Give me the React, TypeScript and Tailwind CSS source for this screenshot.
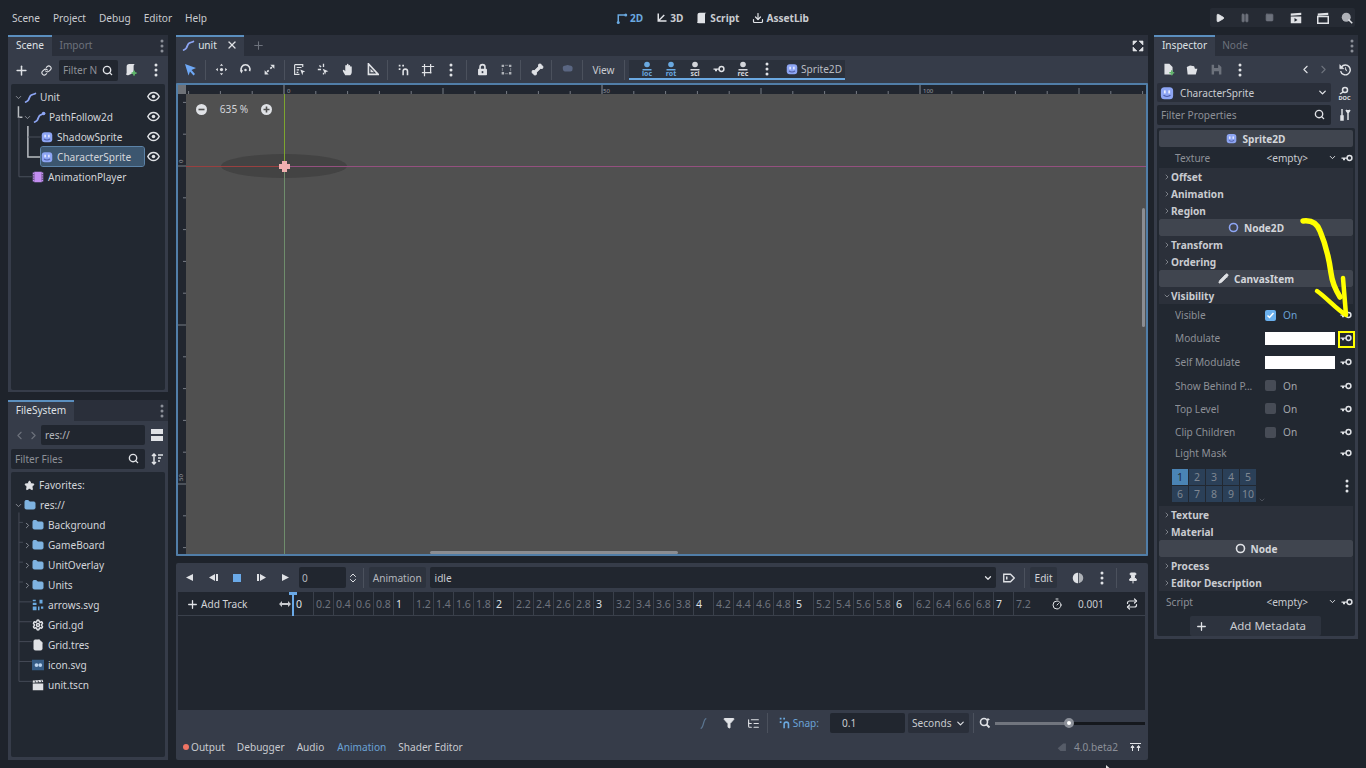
import React from "react";
import { Plus, Search, ChevronDown, ChevronRight, ChevronLeft, X, Star, Folder, File, Settings, Filter, Link, Bone, Pause, Square, Play, ListTree, Timer, Repeat, Pin, Pencil, Download, ChevronsUpDown } from "lucide-react";

const W = "#e0e2e6";
const NB = "#8da5f3";
const AC = "#6aa9e0";

function S({ s = 14, children, className = "" }: { s?: number; children: React.ReactNode; className?: string }) {
  return <svg width={s} height={s} viewBox="0 0 16 16" className={"shrink-0 " + className}>{children}</svg>;
}
const PathI = ({ dot = false }: { dot?: boolean }) => (
  <S s={13}><path d="M2 13.500c1-.5 2.500-.5 3.500-2.500S7 6 9 5s3-1 5-2" fill="none" stroke={NB} strokeWidth="2.200" strokeLinecap="round" />{dot && <circle cx="13" cy="3" r="2.200" fill={NB} />}</S>
);
const SpriteI = ({ s = 12 }: { s?: number }) => (
  <S s={s}><rect x="1" y="1.500" width="14" height="13.500" rx="4" fill={NB} /><rect x="4.500" y="5" width="2" height="3.500" fill="#e8ecff" /><rect x="9.500" y="5" width="2" height="3.500" fill="#e8ecff" /><path d="M4 10.500c2 2 6 2 8 0" stroke="#4c5aa6" strokeWidth="1.400" fill="none" /></S>
);
const AnimI = () => (
  <S s={12}><rect x="3" y="1" width="10" height="14" fill="#c38ef1" /><rect x="1" y="2" width="2" height="12" fill="#c38ef1" /><rect x="13" y="2" width="2" height="12" fill="#c38ef1" /><path d="M1 5h2M1 8h2M1 11h2M13 5h2M13 8h2M13 11h2" stroke="#222831" strokeWidth="1" /></S>
);
const EyeI = () => (
  <S s={13}><path d="M1 8c1.800-3.600 4.300-5 7-5s5.200 1.400 7 5c-1.800 3.600-4.300 5-7 5s-5.200-1.400-7-5z" fill="none" stroke={W} strokeWidth="1.800" /><circle cx="8" cy="8" r="2.200" fill={W} /></S>
);
const KeyI = () => (
  <svg width="12" height="8" viewBox="0 0 12 8" className="shrink-0"><circle cx="8.500" cy="4" r="2.400" fill="none" stroke={W} strokeWidth="1.500" /><path d="M0.500 3.400h5.500v1.400h-2v1.400h-2v-1.400h-1.500z" fill={W} /></svg>
);
const Dots = ({ c = W }: { c?: string }) => (
  <svg width="4" height="14" viewBox="0 0 4 14" className="shrink-0"><circle cx="2" cy="2" r="1.500" fill={c} /><circle cx="2" cy="7" r="1.500" fill={c} /><circle cx="2" cy="12" r="1.500" fill={c} /></svg>
);
const Magnet = ({ c = W }: { c?: string }) => (
  <S s={14}><path d="M7 14V9.500a2.500 2.500 0 0 1 5 0V14" fill="none" stroke={c} strokeWidth="1.800" /><path d="M2 3h2M2 7h2M6 3h2" stroke={c} strokeWidth="1.800" /></S>
);
const KeyToolI = ({ t, c = AC }: { t: string; c?: string }) => (
  <svg width="18" height="18" viewBox="0 0 18 18" className="shrink-0">
    <circle cx="9" cy="4.500" r="2.800" fill={c} />
    <path d="M4.500 9h9v1.500h-9z" fill={c} />
    <text x="9" y="16" textAnchor="middle" fontSize="7" fontWeight="700" fill={c} fontFamily="Noto Sans">{t}</text>
  </svg>
);

function Cell({ w = "w-[24px]", children }: { w?: string; children?: React.ReactNode }) {
  return <div className={w + " h-full flex items-center justify-center shrink-0"}>{children}</div>;
}
const Sep = ({ m = "mx-[2px]" }: { m?: string }) => <div className={"w-px h-[20px] bg-[#4b515d] shrink-0 " + m} />;

function Tab({ label, active, w }: { label: React.ReactNode; active?: boolean; w: string }) {
  return (
    <div className={w + " h-[21px] flex items-center justify-center shrink-0 " + (active ? "bg-[#363c49] border-t-2 border-[#5b8fbf] text-[#dfe1e5] pb-[3px]" : "text-[#6d727c] pb-[1px]")}>{label}</div>
  );
}
function DockTabs({ children }: { children: React.ReactNode }) {
  return <div className="h-[21px] flex items-center bg-[#2a2f3a] shrink-0 relative">{children}<div className="ml-auto mr-[4px]"><Dots c="#8b8f98" /></div></div>;
}
function Field({ className = "", children }: { className?: string; children?: React.ReactNode }) {
  return <div className={"bg-[#21262f] rounded-[2px] flex items-center text-[#b4b7bd] " + className}>{children}</div>;
}

const sceneRows = [
  { name: "Unit", cls: "pl-[3px] gap-[2px]", tx: "ml-[1px]", chev: true, icon: <PathI /> },
  { name: "PathFollow2d", cls: "pl-[12px] gap-[2px]", tx: "ml-[1px]", chev: true, icon: <PathI dot /> },
  { name: "ShadowSprite", cls: "pl-[30px] gap-[4px]", tx: "", icon: <SpriteI /> },
  { name: "CharacterSprite", cls: "pl-[30px] gap-[4px]", tx: "", sel: true, icon: <SpriteI /> },
  { name: "AnimationPlayer", cls: "pl-[21px] gap-[4px]", tx: "", noEye: true, icon: <AnimI /> },
];

function SceneDock() {
  return (
    <div className="h-[357px] flex flex-col bg-[#363c49]">
      <DockTabs>
        <Tab label="Scene" active w="w-[44px]" />
        <Tab label="Import" w="w-[48px]" />
      </DockTabs>
      <div className="h-[28px] flex items-center shrink-0">
        <Cell w="w-[26px]"><Plus size={15} strokeWidth={2.400} color={W} /></Cell>
        <Cell w="w-[24px]"><Link size={11} strokeWidth={2.400} color={W} /></Cell>
        <Field className="w-[59px] h-[21px] ml-px pl-[4px] gap-[3px] overflow-hidden">
          <span className="w-[36px] overflow-hidden whitespace-nowrap text-[#8d9097]">Filter N</span><Search size={11} strokeWidth={3} color={W} />
        </Field>
        <Cell w="w-[26px]">
          <svg width="14" height="14" viewBox="0 0 16 16"><path d="M5 14c-3 0-3-2-2-2V4c0-2 1-3 3-3h7c-2 0-2 2-2 4v6" fill={W} /><path d="M9 11h5v1h-5zM11 9h1v5h-1z" fill="#5fb56a" stroke="#5fb56a" strokeWidth="1" /></svg>
        </Cell>
        <Cell w="w-[24px]"><Dots /></Cell>
      </div>
      <div className="flex-1 mx-[3px] mb-[2px] bg-[#222831] rounded-[2px] pt-[3px] relative">
        <svg className="absolute left-0 top-0 w-full h-[110px] pointer-events-none" viewBox="0 0 155 110">
          <path d="M7.500 22v11h4" fill="none" stroke={W} strokeWidth="1.500" opacity=".8" />
          <path d="M17 42v31h13" fill="none" stroke={W} strokeWidth="1.500" opacity=".8" />
          <path d="M17 53h13M8 33v60h13" fill="none" stroke="#4a505c" strokeWidth="1" />
        </svg>
        {sceneRows.map((r) => (
          <div key={r.name} className={"relative h-[20px] flex items-center " + r.cls}>
            {r.sel && <div className="absolute left-[30px] top-0 w-[103px] h-[19px] bg-[#3c566f] outline outline-1 outline-[#5c83a8] rounded-[2px]" />}
            {r.chev && <ChevronDown size={9} strokeWidth={2.500} color="#8b8f98" className="-mr-[1px]" />}
            <div className="relative flex items-center">{r.icon}</div>
            <span className={"relative whitespace-nowrap text-[#d3d5da] " + r.tx}>{r.name}</span>
            {!r.noEye && <div className="absolute left-[136px] top-[3px]"><EyeI /></div>}
          </div>
        ))}
      </div>
    </div>
  );
}

const fsRows = [
  { n: "Background", chev: true, ic: "f" },
  { n: "GameBoard", chev: true, ic: "f" },
  { n: "UnitOverlay", chev: true, ic: "f" },
  { n: "Units", chev: true, ic: "f" },
  { n: "arrows.svg", ic: "a" },
  { n: "Grid.gd", ic: "g" },
  { n: "Grid.tres", ic: "t" },
  { n: "icon.svg", ic: "i" },
  { n: "unit.tscn", ic: "s" },
];
function FsIcon({ k }: { k: string }) {
  if (k === "f") return <Folder size={12} fill="#7fb3e0" color="#7fb3e0" className="shrink-0" />;
  if (k === "g") return <Settings size={12} strokeWidth={3} color={W} className="shrink-0" />;
  if (k === "t") return <File size={12} fill={W} color={W} className="shrink-0" />;
  if (k === "a") return (
    <S s={12}><path d="M1 1h4v2h-4zM10 1h4v5h-4zM1 5h5v3h-5zM1 10h5v5h-5zM8 10h2v5h-2zM12 10h3v3h-3z" fill={AC} /></S>
  );
  if (k === "i") return (
    <S s={12}><rect x="0" y="1" width="16" height="14" fill="#365c85" /><circle cx="6" cy="8" r="2.500" fill="#bcd4ef" /><circle cx="11" cy="8" r="2.500" fill="#bcd4ef" /></S>
  );
  return <S s={12}><path d="M1 6h14v9h-14z" fill={W} /><path d="M1 2l13-1 1 3-14 1z" fill={W} /><path d="M4 2l1 3M8 2l1 3M12 1.500l1 3" stroke="#222831" /></S>;
}
function FsDock() {
  return (
    <div className="h-[360px] flex flex-col bg-[#363c49]">
      <DockTabs>
        <Tab label="FileSystem" active w="w-[66px]" />
      </DockTabs>
      <div className="h-[28px] flex items-center shrink-0">
        <Cell w="w-[18px]"><ChevronLeft size={13} color="#6d727c" className="ml-[4px]" /></Cell>
        <Cell w="w-[15px]"><ChevronRight size={13} color="#6d727c" /></Cell>
        <Field className="w-[104px] h-[20px] pl-[4px]"><span>res://</span></Field>
        <Cell w="w-[23px]"><div className="w-[12px] flex flex-col gap-[2px]"><div className="h-[5px] bg-[#e0e2e6]" /><div className="h-[5px] bg-[#e0e2e6]" /></div></Cell>
      </div>
      <div className="h-[23px] flex items-start shrink-0 pl-[3px]">
        <Field className="w-[134px] h-[20px] pl-[4px] pb-[1px] justify-between pr-[6px]"><span className="text-[#8d9097]">Filter Files</span><Search size={11} strokeWidth={3} color={W} /></Field>
        <Cell w="w-[23px] !h-[20px]">
          <svg width="12" height="12" viewBox="0 0 12 12"><path d="M3 1v10M1 3l2-2 2 2M1 9l2 2 2-2M7 2h5M7 5h3M7 8h2" fill="none" stroke={W} strokeWidth="1.500" /></svg>
        </Cell>
      </div>
      <div className="flex-1 mx-[3px] mb-[3px] bg-[#222831] rounded-[2px] pt-[3px] relative">
        <svg className="absolute left-0 top-0 w-full h-[220px] pointer-events-none" viewBox="0 0 155 220">
          <path d="M8 40v170M8 50h4M8 70h4M8 90h4M8 110h4M8 130h13M8 150h13M8 170h13M8 190h13M8 210h13" fill="none" stroke="#454b57" strokeWidth="1" />
        </svg>
        <div className="relative h-[20px] flex items-center pl-[13px] gap-[4px]"><Star size={11} fill={W} color={W} /><span className="text-[#d3d5da]">Favorites:</span></div>
        <div className="relative h-[20px] flex items-center pl-[3px] gap-[1px]"><ChevronDown size={9} strokeWidth={2.500} color="#8b8f98" /><Folder size={12} fill="#7fb3e0" color="#7fb3e0" /><span className="text-[#d3d5da] ml-[3px]">res://</span></div>
        {fsRows.map((r) => (
          <div key={r.n} className={"relative h-[20px] flex items-center " + (r.chev ? "pl-[12px]" : "pl-[21px]")}>
            {r.chev && <ChevronRight size={9} strokeWidth={2.500} color="#8b8f98" />}
            <FsIcon k={r.ic} />
            <span className="ml-[4px] text-[#d3d5da]">{r.n}</span>
          </div>
        ))}
      </div>
    </div>
  );
}

function Viewport() {
  const W_ = 968, H_ = 470;
  const ticks = [];
  for (let i = -3; i <= 27; i++) {
    const x = 106 + i * 31.8;
    const long = i % 5 === 0 && i !== 0 && i % 10 !== 0;
    const maj = i % 10 === 0;
    ticks.push(<line key={i} x1={x} x2={x} y1={maj ? 0 : long ? 3 : 6} y2={9} stroke={maj ? "#8b8f98" : "#777c85"} strokeWidth="1" />);
  }
  const vt = [];
  for (let i = 0; i < 15; i++) {
    const y = 81 + (i - 2) * 31.8;
    vt.push(<line key={i} x1={i % 5 === 2 ? 0 : 5} x2={8} y1={y} y2={y} stroke="#777c85" />);
  }
  return (
    <div className="flex-1 border-2 border-[#517ea8] rounded-[1px] relative overflow-hidden bg-[#505050]">
      <svg className="absolute inset-0" width={W_} height={H_} viewBox={`0 0 ${W_} ${H_}`}>
        <rect x="0" y="0" width={W_} height="9" fill="#21262f" />
        <rect x="0" y="0" width="8" height={H_} fill="#21262f" />
        <rect x="0" y="0" width="8" height="9" fill="#6e7278" />
        {ticks}
        {vt}
        <text x="109" y="8" fontSize="6" fill="#9a9da3" fontFamily="Noto Sans">0</text>
        <text x="425" y="8" fontSize="6" fill="#9a9da3" fontFamily="Noto Sans">50</text>
        <text x="745" y="8" fontSize="6" fill="#9a9da3" fontFamily="Noto Sans">100</text>
        <text x="5" y="78" fontSize="6" fill="#9a9da3" fontFamily="Noto Sans" transform="rotate(-90 5 78)">0</text>
        <text x="5" y="396" fontSize="6" fill="#9a9da3" fontFamily="Noto Sans" transform="rotate(-90 5 396)">50</text>
        <ellipse cx="106" cy="81" rx="63" ry="12" fill="#434343" />
        <line x1="106.500" x2="106.500" y1="9" y2="81" stroke="#7da52f" />
        <line x1="106.500" x2="106.500" y1="81" y2="470" stroke="#6f8d6c" />
        <line x1="8" x2="106" y1="81.500" y2="81.500" stroke="#984040" />
        <line x1="106" x2="968" y1="81.500" y2="81.500" stroke="#94507f" />
        <path d="M104 76h5v3h3v5h-3v3h-5v-3h-3v-5h3z" fill="#f0b0b0" />
        <rect x="252" y="466" width="248" height="3" rx="1.500" fill="#8b8d92" />
        <rect x="964" y="123" width="3" height="119" rx="1.500" fill="#8b8d92" />
      </svg>
      <div className="absolute left-[18px] top-[17px] flex items-center text-[#d3d5da]">
        <svg width="11" height="11" viewBox="0 0 11 11"><circle cx="5.500" cy="5.500" r="5.500" fill={W} /><rect x="2.500" y="4.700" width="6" height="1.600" fill="#505050" /></svg>
        <span className="w-[54px] text-center">635 %</span>
        <svg width="11" height="11" viewBox="0 0 11 11"><circle cx="5.500" cy="5.500" r="5.500" fill={W} /><path d="M2.500 4.700h2.200v-2.200h1.600v2.200h2.200v1.600h-2.200v2.200h-1.600v-2.200h-2.200z" fill="#505050" /></svg>
      </div>
    </div>
  );
}

function Toolbar2D() {
  return (
    <div className="h-[27px] flex items-center pl-[2px] shrink-0">
      <Cell><svg width="13" height="13" viewBox="0 0 13 13"><path d="M1 1l11 4-4.500 2 3.500 4-1.500 1.500-3.500-4-1.500 4z" fill="#6ea8f5" /></svg></Cell>
      <Sep m="mx-[3px]" />
      <Cell><S s={13}><circle cx="8" cy="8" r="2" fill={W} /><path d="M8 1l2 2.500h-4zM8 15l2-2.500h-4zM1 8l2.500 2v-4zM15 8l-2.500 2v-4z" fill={W} /></S></Cell>
      <Cell><S s={13}><path d="M3 10a5.500 5.500 0 1 1 10 0" fill="none" stroke={W} strokeWidth="2" /><circle cx="8" cy="8.500" r="1.500" fill={W} /><path d="M1 9h4l-2 4z" fill={W} /></S></Cell>
      <Cell><S s={13}><path d="M9 2h5v5zM2 14v-5l5 5z" fill={W} /><path d="M11 5L9 7M5 11l2-2" stroke={W} strokeWidth="2" /></S></Cell>
      <Sep m="ml-[3px] mr-[2px]" />
      <Cell><S s={13}><path d="M2 2h10v3M2 2v12h6M4.500 5.500h6M4.500 8.500h3M4.500 11.500h2" fill="none" stroke={W} strokeWidth="1.400" /><path d="M9 8l6 2.500-2.500 1L11.500 15z" fill={W} /></S></Cell>
      <Cell w="w-[25px]"><S s={13}><path d="M1 8h4M8 1v4M3 3l2 2M8 14v-2" stroke={W} strokeWidth="1.600" /><path d="M7 7l7 3-3 1-1 3z" fill={W} /></S></Cell>
      <Cell><S s={13}><path d="M4 15c-1-2-3-4-3-6 0-1 1-1 2 0l1 1V3.500a1 1 0 0 1 2 0V2a1 1 0 0 1 2 0v1.500a1 1 0 0 1 2 0V5a1 1 0 0 1 2 0v6c0 2-1 3-2 4z" fill={W} /></S></Cell>
      <Cell><S s={13}><path d="M3 1v13h12z" fill="none" stroke={W} strokeWidth="2" /><path d="M5.500 7v4.500h4.500z" fill={W} /></S></Cell>
      <Sep m="ml-[3px] mr-[4px]" />
      <Cell w="w-[24px]"><Magnet /></Cell>
      <Cell w="w-[23px]"><S s={14}><path d="M4 1v14M11 1v11M1 4h14M1 11h11" stroke={W} strokeWidth="1.400" fill="none" /></S></Cell>
      <Cell w="w-[24px]"><Dots /></Cell>
      <Sep m="ml-[3px] mr-[3px]" />
      <Cell><S s={13}><path d="M5 8V5a3 3 0 0 1 6 0v3" fill="none" stroke={W} strokeWidth="2" /><rect x="2.500" y="7" width="11" height="8" rx="1" fill={W} /><rect x="7" y="10" width="2" height="2.500" fill="#363c49" /></S></Cell>
      <Cell><S s={13}><path d="M2 2h3v3h-3zM11 2h3v3h-3zM2 11h3v3h-3zM11 11h3v3h-3z" fill="#aeb1b7" /><path d="M6 3h4M3 6v4M13 6v4M6 13h4" stroke="#6d727c" strokeWidth="1.500" /></S></Cell>
      <Sep m="ml-[2px] mr-[4px]" />
      <Cell><Bone size={13} fill={W} color={W} /></Cell>
      <Sep m="ml-[2px] mr-[4px]" />
      <Cell><S s={12}><path d="M1 5c0-2 2-3 4-3 1-1 4-1 5 0 3 0 5 2 4 5 0 2-1 3-3 3H4C2 10 1 8 1 5z" fill="#5a6682" /></S></Cell>
      <Sep m="ml-[2px] mr-0" />
      <div className="w-[41px] text-center text-[#c9cbd0]">View</div>
      <Sep m="m-0" />
      <div className="ml-[4px] w-[216px] h-[20px] bg-[#2b313c] border-b-2 border-[#6ba9e2] flex items-center pl-[6px] shrink-0">
        <Cell w="w-[24px]"><KeyToolI t="loc" /></Cell>
        <Cell w="w-[24px]"><KeyToolI t="rot" /></Cell>
        <Cell w="w-[24px]"><KeyToolI t="scl" c="#d3d5da" /></Cell>
        <Cell w="w-[24px]"><KeyI /></Cell>
        <Cell w="w-[24px]"><KeyToolI t="rec" c="#d3d5da" /></Cell>
        <Cell w="w-[24px]"><Dots /></Cell>
        <div className="ml-[7px] flex items-center gap-[3px] text-[#b9bcc2]"><SpriteI s={12} /><span>Sprite2D</span></div>
      </div>
    </div>
  );
}

function Timeline() {
  const cells: { t: string; big: boolean }[] = [];
  for (let i = 0; i <= 36; i++) {
    const v = i / 5;
    const big = i % 5 === 0;
    cells.push({ t: big ? String(v) : v.toFixed(1), big });
  }
  return (
    <div className="flex h-[24px] items-stretch shrink-0">
      {cells.map((c, i) => (
        <div key={i} className="w-[20px] shrink-0 border-l border-[#3a404b] flex items-center pl-[2px] pt-[1px] text-[10.500px]">
          <span className={c.big ? "text-[#dfe1e5]" : "text-[#6f747e]"}>{c.t}</span>
        </div>
      ))}
    </div>
  );
}

function AnimPanel() {
  return (
    <div className="h-[197px] bg-[#363c49] rounded-[2px] flex flex-col shrink-0">
      <div className="h-[29px] flex items-center shrink-0 pl-[1px]">
        <Cell w="w-[24px]"><svg width="9" height="9" viewBox="0 0 9 9"><path d="M8 1v7L1 4.500z" fill={W} /></svg></Cell>
        <Cell w="w-[24px]"><svg width="11" height="9" viewBox="0 0 11 9"><path d="M7 1v7L1 4.500z M8 1h2v7h-2z" fill={W} /></svg></Cell>
        <Cell w="w-[24px]"><div className="w-[8px] h-[8px] bg-[#6aa9e8]" /></Cell>
        <Cell w="w-[24px]"><svg width="11" height="9" viewBox="0 0 11 9"><path d="M4 1v7l6-3.500z M1 1h2v7h-2z" fill={W} /></svg></Cell>
        <Cell w="w-[24px]"><svg width="9" height="9" viewBox="0 0 9 9"><path d="M1 1v7l7-3.500z" fill={W} /></svg></Cell>
        <Field className="w-[47px] h-[21px] ml-[2px] pl-[3px]">0</Field>
        <Cell w="w-[15px]"><ChevronsUpDown size={12} color={W} /></Cell>
        <Sep m="mx-[2px]" />
        <Field className="w-[57px] h-[21px] ml-[3px] justify-center !bg-[#2d333e]">Animation</Field>
        <Field className="w-[569px] h-[21px] ml-[4px] pl-[5px] justify-between pr-[3px] text-[#c9cbd0]"><span>idle</span><ChevronDown size={10} strokeWidth={3} color={W} /></Field>
        <Cell w="w-[26px]"><S s={12}><path d="M1 3h9l5 5-5 5h-9z" fill="none" stroke={W} strokeWidth="1.800" /><path d="M5 6v4" stroke={W} strokeWidth="2" /></S></Cell>
        <Sep m="mx-[2px]" />
        <Field className="w-[27px] h-[21px] ml-[3px] justify-center !bg-[#2d333e] text-[#d3d5da]">Edit</Field>
        <Cell w="w-[42px]"><S s={12}><path d="M8 1c-4 0-7 3-7 7s3 7 7 7z" fill={W} /><path d="M9 1c3 1 6 3 6 7s-3 6-6 7z" fill={W} opacity=".7" /></S></Cell>
        <Cell w="w-[6px]"><Dots /></Cell>
        <Cell w="w-[10px]" />
        <Sep m="mx-[1px]" />
        <Cell w="w-[30px]"><Pin size={12} fill={W} color={W} /></Cell>
      </div>
      <div className="h-[118px] ml-[2px] mr-[3px] bg-[#21262f] flex flex-col shrink-0">
        <div className="h-[24px] flex items-center border-b border-[#3a404b] relative">
          <div className="w-[72px] flex items-center pl-[8px] pt-[1px] gap-[2px] text-[#d3d5da] shrink-0 whitespace-nowrap"><Plus size={13} strokeWidth={2.400} color={W} /><span>Add Track</span></div>
          <div className="w-[43px] shrink-0 flex justify-end pr-[2px]"><svg width="12" height="8" viewBox="0 0 12 8"><path d="M0 4l3-3v2h6v-2l3 3-3 3v-2h-6v2z" fill="#c9cbd0" /></svg></div>
          <Timeline />
          <div className="absolute left-[114px] top-0 w-[2px] h-[24px] bg-[#6aa9e8]" />
          <div className="absolute left-[111px] top-0 w-[8px] h-[3px] bg-[#6aa9e8]" />
          <div className="ml-auto flex items-center h-full shrink-0 pt-[1px]">
            <Timer size={12} color={W} className="mr-[15px]" />
            <span className="w-[42px] text-[#c9cbd0] mr-[6px]">0.001</span>
            <Repeat size={12} strokeWidth={2.400} color={W} className="mr-[7px]" />
          </div>
        </div>
      </div>
      <div className="h-[26px] flex items-center justify-end shrink-0 pr-[3px]">
        <S s={13}><path d="M2 14c4 0 3-12 7-12" fill="none" stroke="#5b7590" strokeWidth="1.500" /></S>
        <Filter size={12} fill={W} color={W} className="ml-[11px]" />
        <ListTree size={13} color={W} className="ml-[12px]" />
        <Sep m="ml-[7px] mr-[10px]" />
        <Magnet c={AC} />
        <span className="text-[#6aa2d6] ml-[1px]">Snap:</span>
        <Field className="w-[75px] h-[20px] ml-[11px] pl-[12px] text-[#c9cbd0]">0.1</Field>
        <Field className="w-[61px] h-[20px] ml-[3px] pl-[4px] justify-between pr-[3px] !bg-[#2a2f3a] text-[#c9cbd0]">Seconds<ChevronDown size={11} strokeWidth={2.500} color={W} /></Field>
        <Sep m="mx-[4px]" />
        <svg width="12" height="12" viewBox="0 0 12 12" className="ml-[1px]"><circle cx="5" cy="5" r="3.500" fill="none" stroke={W} strokeWidth="1.600" /><path d="M7.500 7.500l3 3" stroke={W} strokeWidth="1.800" /><path d="M9 1v3M7.500 2.500h3" stroke={W} strokeWidth="1" /></svg>
        <div className="w-[150px] h-[3px] bg-[#15181d] ml-[4px] relative">
          <div className="absolute left-0 top-0 h-full w-[74px] bg-[#71757e]" />
          <div className="absolute left-[69px] top-[-4px] w-[10px] h-[10px] rounded-full bg-white border-[3px] border-[#8b8f98]" />
        </div>
      </div>
      <div className="h-[24px] flex items-center text-[#c9cbd0] shrink-0 pl-[7px] pb-[2px]">
        <span className="w-[6px] h-[6px] rounded-full bg-[#ef7464] mr-[2px]" />
        <span>Output</span>
        <span className="ml-[12px]">Debugger</span>
        <span className="ml-[12px]">Audio</span>
        <span className="ml-[13px] text-[#6aa2d6]">Animation</span>
        <span className="ml-[12px]">Shader Editor</span>
        <div className="ml-auto flex items-center text-[#8b8f98] mr-[7px]">
          <S s={11}><path d="M1 9l8-7h4v11H5z" fill="#565c68" /></S>
          <span className="ml-[6px]">4.0.beta2</span>
          <svg width="11" height="9" viewBox="0 0 11 9" className="ml-[12px]"><path d="M0 .5h11M2.500 8V4M8.500 8V4M1 4.500l1.500-2 1.500 2zM7 4.500l1.500-2 1.500 2z" stroke={W} strokeWidth="1" fill={W} /></svg>
        </div>
      </div>
    </div>
  );
}

function Header({ children }: { children: React.ReactNode }) {
  return <div className="h-[17px] mx-[2px] bg-[#40454f] rounded-[2px] flex items-center justify-center gap-[5px] font-bold text-[#d3d5da] shrink-0">{children}</div>;
}
function Sub({ label, open }: { label: string; open?: boolean }) {
  return (
    <div className="h-[17px] mx-[2px] bg-[#2b303a] flex items-center pl-[4px] font-bold text-[#c9cbd0] shrink-0">
      {open ? <ChevronDown size={8} strokeWidth={2.500} color="#8b8f98" /> : <ChevronRight size={8} strokeWidth={2.500} color="#8b8f98" />}
      <span>{label}</span>
    </div>
  );
}
function Row({ label, h, children }: { label: string; h: string; children?: React.ReactNode }) {
  return (
    <div className={h + " mx-[2px] flex items-center pl-[16px] shrink-0"}>
      <span className="w-[90px] shrink-0 text-[#8d9097] whitespace-nowrap overflow-hidden">{label}</span>
      <div className="w-[75px] shrink-0 flex items-center">{children}</div>
      <KeyI />
    </div>
  );
}
const Check = ({ on }: { on?: boolean }) => (
  <div className="flex items-center gap-[7px]">
    {on ? (
      <div className="w-[11px] h-[11px] rounded-[2px] bg-[#6ab0ee] flex items-center justify-center"><svg width="9" height="9" viewBox="0 0 9 9"><path d="M1.500 4.500l2 2 4-4.500" fill="none" stroke="#fff" strokeWidth="1.500" /></svg></div>
    ) : <div className="w-[11px] h-[11px] rounded-[2px] bg-[#474c56]" />}
    <span className={on ? "text-[#6aa2d6]" : "text-[#a4a7ad]"}>On</span>
  </div>
);

function Inspector() {
  return (
    <div className="w-[204px] shrink-0 flex flex-col bg-[#363c49]">
      <DockTabs>
        <Tab label="Inspector" active w="w-[61px]" />
        <Tab label="Node" w="w-[40px]" />
      </DockTabs>
      <div className="h-[27px] flex items-center shrink-0 pl-[2px]">
        <Cell><S s={13}><path d="M3 1h6l4 4v9H3z" fill={W} /><path d="M9 12h6M12 9v6" stroke="#5fb56a" strokeWidth="2" /></S></Cell>
        <Cell><S s={13}><path d="M1 5l4-2 5 1 1 3h3l-2 7H2z" fill={W} /></S></Cell>
        <Cell><S s={13}><path d="M2 2h9l3 3v9H2z M5 2v4h5V2 M5 10h6v4H5z" fill="#6d727c" fillRule="evenodd" /></S></Cell>
        <Cell><Dots /></Cell>
        <div className="ml-auto flex items-center h-full">
          <Cell w="w-[18px]"><ChevronLeft size={13} color={W} /></Cell>
          <Cell w="w-[18px]"><ChevronRight size={13} color="#6d727c" /></Cell>
          <Cell w="w-[26px]"><S s={13}><path d="M3 5a6 6 0 1 1-1 5" fill="none" stroke={W} strokeWidth="1.800" /><path d="M1 2v5h5z M8 5v3.500l2 1.500" fill={W} stroke={W} strokeWidth=".8" /></S></Cell>
        </div>
      </div>
      <div className="h-[19px] flex items-center shrink-0 pl-[3px]">
        <Field className="w-[174px] h-[19px] pl-[3px] gap-[6px] !bg-[#2a2f3a] text-[#c9cbd0]"><SpriteI s={14} /><span>CharacterSprite</span><ChevronDown size={11} strokeWidth={3} color={W} className="ml-auto mr-[3px]" /></Field>
        <Cell w="w-[27px]"><svg width="13" height="14" viewBox="0 0 13 14"><circle cx="7" cy="4" r="2.500" fill="none" stroke={W} strokeWidth="1.500" /><path d="M5 6l-3 2" stroke={W} strokeWidth="1.500" /><text x="6.500" y="13.500" textAnchor="middle" fontSize="5.500" fontWeight="700" fill={W} fontFamily="Noto Sans">DOC</text></svg></Cell>
      </div>
      <div className="h-[20px] mt-[3px] flex items-center shrink-0 pl-[3px]">
        <Field className="w-[174px] h-[20px] pl-[4px] pb-[1px] justify-between pr-[6px]"><span className="text-[#8d9097]">Filter Properties</span><Search size={11} strokeWidth={3} color={W} /></Field>
        <Cell w="w-[27px]"><svg width="12" height="12" viewBox="0 0 12 12"><path d="M3 0v7M2 7h2v4H2zM7 1l2 3 2-3M9 4v7" stroke={W} strokeWidth="1.500" fill={W} /></svg></Cell>
      </div>
      <div className="flex-1 mt-[3px] mx-[3px] mb-[3px] bg-[#222831] rounded-[2px] pt-[2px] flex flex-col">
        <Header><SpriteI s={11} />Sprite2D</Header>
        <div className="h-[21px] mx-[2px] pl-[16px] flex items-center shrink-0 text-[#8d9097]">
          <span className="w-[92px]">Texture</span><span className="w-[62px] text-[#c9cbd0]">&lt;empty&gt;</span><ChevronDown size={9} strokeWidth={2.500} color={W} className="mr-[4px]" /><KeyI />
        </div>
        <Sub label="Offset" />
        <Sub label="Animation" />
        <Sub label="Region" />
        <Header><svg width="11" height="11" viewBox="0 0 11 11"><circle cx="5.500" cy="5.500" r="4" fill="none" stroke={NB} strokeWidth="1.600" /></svg>Node2D</Header>
        <Sub label="Transform" />
        <Sub label="Ordering" />
        <Header><Pencil size={11} fill={W} color={W} />CanvasItem</Header>
        <Sub label="Visibility" open />
        <Row label="Visible" h="h-[22px]"><Check on /></Row>
        <Row label="Modulate" h="h-[24px]"><div className="w-[70px] h-[13px] bg-white" /></Row>
        <Row label="Self Modulate" h="h-[24px]"><div className="w-[70px] h-[13px] bg-white" /></Row>
        <Row label="Show Behind P..." h="h-[23px]"><Check /></Row>
        <Row label="Top Level" h="h-[23px]"><Check /></Row>
        <Row label="Clip Children" h="h-[24px]"><Check /></Row>
        <Row label="Light Mask" h="h-[18px]" />
        <div className="h-[44px] shrink-0 pl-[15px] pt-[7px] flex items-start">
          <div className="grid grid-cols-[repeat(5,16px)] grid-rows-[repeat(2,16px)] gap-px text-center text-[10.500px] leading-[16px] text-[#7f8792]">
            {["1", "2", "3", "4", "5", "6", "7", "8", "9", "10"].map((n, i) => (
              <div key={n} className={i === 0 ? "bg-[#4a84b5] text-[#1f2b38]" : "bg-[#2b4058]"}>{n}</div>
            ))}
          </div>
          <ChevronDown size={8} color="#5f646e" className="mt-[27px] ml-[2px]" />
          <div className="ml-auto mr-[6px] mt-[10px]"><Dots /></div>
        </div>
        <Sub label="Texture" />
        <Sub label="Material" />
        <Header><svg width="11" height="11" viewBox="0 0 11 11"><circle cx="5.500" cy="5.500" r="4" fill="none" stroke={W} strokeWidth="1.600" /></svg>Node</Header>
        <Sub label="Process" />
        <Sub label="Editor Description" />
        <div className="h-[21px] mx-[2px] pl-[7px] flex items-center shrink-0 text-[#8d9097]">
          <span className="w-[101px]">Script</span><span className="w-[62px] text-[#c9cbd0]">&lt;empty&gt;</span><ChevronDown size={9} strokeWidth={2.500} color={W} className="mr-[4px]" /><KeyI />
        </div>
        <div className="mt-[4px] ml-[33px] w-[131px] h-[20px] bg-[#2d333e] rounded-[2px] flex items-center pl-[5px] shrink-0 text-[#c9cbd0]">
          <Plus size={13} strokeWidth={2.400} color={W} />
          <span className="flex-1 text-center pr-[1px] ml-[8px] text-[11.500px]">Add Metadata</span>
        </div>
      </div>
    </div>
  );
}

export default function App() {
  return (
    <div className="w-[1366px] h-[768px] overflow-hidden flex flex-col bg-[#1e232b] font-['Noto_Sans',sans-serif] text-[10.100px] leading-[14px] text-[#c9cbd0] relative">
      <div className="h-[35px] flex items-center shrink-0">
        <div className="w-[616px] flex pl-[12px] gap-[13px] shrink-0 text-[#c9cbd0]">
          {["Scene", "Project", "Debug", "Editor", "Help"].map((m) => <span key={m}>{m}</span>)}
        </div>
        <div className="w-[594px] flex items-center font-bold shrink-0">
          <span className="flex items-center gap-[2px] text-[#6aa9e0]"><S s={12}><path d="M3 14V4h9" fill="none" stroke="#6aa9e0" strokeWidth="2" /><circle cx="3" cy="14" r="2" fill="#6aa9e0" /><circle cx="13" cy="4" r="2" fill="#6aa9e0" /></S>2D</span>
          <span className="flex items-center gap-[2px] ml-[13px]"><S s={12}><path d="M3 2v10h11M3 12l8-8" fill="none" stroke={W} strokeWidth="2" /></S>3D</span>
          <span className="flex items-center gap-[2px] ml-[13px]"><S s={12}><path d="M4 15c-3 0-3-2-2-2V4c0-2 1-3 3-3h9c-2 0-2 2-2 4v10z" fill={W} /></S>Script</span>
          <span className="flex items-center gap-[2px] ml-[13px]"><Download size={12} strokeWidth={2.400} color={W} />AssetLib</span>
        </div>
        <div className="w-[145px] h-[19px] bg-[#262b34] rounded-[2px] flex items-center shrink-0 pl-[3px]">
          <Cell w="w-[14px]"><Play size={10} fill={W} color={W} /></Cell>
          <Cell w="w-[36px]"><Pause size={10} fill="#6d727c" color="#6d727c" /></Cell>
          <Cell w="w-[12px]"><Square size={9} fill="#6d727c" color="#6d727c" /></Cell>
          <Cell w="w-[42px]"><S s={12}><path d="M1 6h14v9h-14z" fill={W} /><path d="M1 2l14-1v3l-14 1z" fill={W} /><path d="M6 8l4 2.500-4 2.500z" fill="#222831" /></S></Cell>
          <Cell w="w-[12px]"><S s={12}><path d="M1 6h14v9h-14z" fill="none" stroke={W} strokeWidth="2" /><path d="M1 2l14-1v3l-14 1z" fill={W} /></S></Cell>
          <Cell w="w-[36px]"><S s={12}><circle cx="7" cy="7" r="6" fill="#aeb1b7" /><path d="M10 10l5 5" stroke={W} strokeWidth="2" /></S></Cell>
        </div>
      </div>
      <div className="flex-1 flex px-[8px] pb-[8px] min-h-0">
        <div className="w-[160px] shrink-0 flex flex-col gap-[8px]">
          <SceneDock />
          <FsDock />
        </div>
        <div className="w-[972px] ml-[8px] shrink-0 flex flex-col">
          <div className="h-[521px] shrink-0 flex flex-col bg-[#363c49]">
            <div className="h-[21px] flex items-center bg-[#2a2f3a] shrink-0">
              <Tab w="w-[68px]" active label={<span className="flex items-center gap-[3px]"><PathI /><span>unit</span><X size={12} strokeWidth={2.600} color={W} className="ml-[6px]" /></span>} />
              <Plus size={13} color="#6d727c" className="ml-[8px]" />
              <div className="ml-auto mr-[4px]">
                <svg width="12" height="12" viewBox="0 0 12 12"><path d="M1 1h4L1 5zM11 1v4L7 1zM1 11V7l4 4zM11 11H7l4-4z" fill={W} stroke={W} strokeWidth=".6" /></svg>
              </div>
            </div>
            <Toolbar2D />
            <Viewport />
          </div>
          <div className="h-[7px] shrink-0" />
          <AnimPanel />
        </div>
        <div className="ml-[6px]"><Inspector /></div>
      </div>
      <svg className="absolute left-0 top-0 pointer-events-none" width="1366" height="768" viewBox="0 0 1366 768">
        <path d="M1303 221c8-1 14 2 17 10 6 14 9 27 11 42 1 8 4 16 9 24" fill="none" stroke="#ffff00" strokeWidth="5.500" strokeLinecap="round" />
        <path d="M1317 291c10 7 19 18 29 24M1343 278c1 12 2 25 3 37" fill="none" stroke="#ffff00" strokeWidth="4.500" strokeLinecap="round" />
        <rect x="1339" y="332" width="15" height="15" fill="none" stroke="#ffff00" strokeWidth="2" />
        <path d="M1106 765l0 5 1-1 1 2 1-.5-1-2h2z" fill="#e0e0e0" />
      </svg>
    </div>
  );
}
